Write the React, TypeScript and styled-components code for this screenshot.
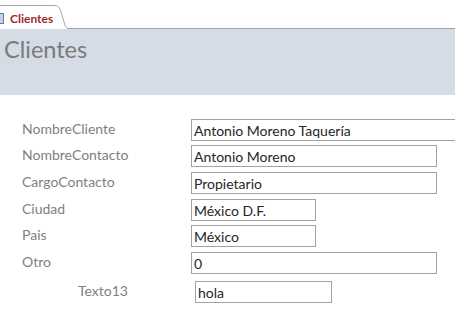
import React from "react";
import styled, { createGlobalStyle } from "styled-components";

const Global = createGlobalStyle`
  html, body { margin: 0; padding: 0; background: #ffffff; }
  body { font-family: Lato, "Noto Sans", sans-serif; overflow: hidden; }
`;

const Page = styled.div`
  width: 455px;
  height: 318px;
  overflow: hidden;
  background: #ffffff;
`;

const TabBar = styled.div`
  height: 29px;
  display: flex;
  align-items: flex-end;
  position: relative;
`;

const Tab = styled.div`
  display: flex;
  align-items: stretch;
  height: 24px;
  position: relative;
  z-index: 1;
`;

const TabBody = styled.div`
  display: flex;
  align-items: center;
  gap: 6px;
  height: 23px;
  border-top: 1px solid #a5a5a5;
  background: #ffffff;
  padding-left: 0;
`;

const TabIcon = styled.span`
  width: 3px;
  height: 9px;
  margin-top: 1px;
  border: 1px solid #6a7a96;
  border-left: none;
  background: #c5d1e3;
`;

const TabLabel = styled.span`
  font-family: Lato, sans-serif;
  font-weight: 700;
  font-size: 12px;
  color: #a3262e;
  padding-top: 1px;
`;

const TabCurve = styled.svg`
  display: block;
  width: 15px;
  height: 24px;
`;

const TabLine = styled.div`
  flex: 1;
  height: 23px;
  border-bottom: 1px solid #9ea3ab;
`;

const Header = styled.div`
  height: 66px;
  background: #d5dce6;
  padding: 6px 0 0 4px;
  box-sizing: border-box;
`;

const Title = styled.h1`
  margin: 0;
  font-family: Lato, sans-serif;
  font-weight: 400;
  font-size: 23.5px;
  color: #7b7b7b;
`;

const Form = styled.div`
  padding-top: 24px;
  display: flex;
  flex-direction: column;
`;

const Row = styled.div<{ $top?: number; $boxLeft?: number }>`
  display: grid;
  grid-template-columns: ${(p) => p.$boxLeft ?? 191}px auto;
  align-items: center;
  height: 22px;
  margin-top: ${(p) => p.$top ?? 0}px;
`;

const Label = styled.span<{ $left?: number }>`
  padding-left: ${(p) => p.$left ?? 22}px;
  padding-bottom: 4px;
  font-family: Lato, sans-serif;
  font-size: 14px;
  color: #7f7f7f;
  white-space: nowrap;
`;

const Box = styled.div<{ $w: number }>`
  width: ${(p) => p.$w}px;
  height: 22px;
  box-sizing: border-box;
  border: 1px solid #a3a3a3;
  padding: 0 0 0 2px;
  display: flex;
  align-items: center;
  font-family: Lato, sans-serif;
  font-size: 14px;
  color: #262626;
  white-space: nowrap;
  overflow: hidden;
  background: #ffffff;
`;

const rows = [
  { label: "NombreCliente", value: "Antonio Moreno Taquería", w: 290, top: 0 },
  { label: "NombreContacto", value: "Antonio Moreno", w: 246, top: 4 },
  { label: "CargoContacto", value: "Propietario", w: 246, top: 5 },
  { label: "Ciudad", value: "México D.F.", w: 125, top: 5 },
  { label: "Pais", value: "México", w: 125, top: 4 },
  { label: "Otro", value: "0", w: 246, top: 5 },
];

export default function App() {
  return (
    <Page>
      <Global />
      <TabBar>
        <Tab>
          <TabBody>
            <TabIcon />
            <TabLabel>Clientes</TabLabel>
          </TabBody>
          <TabCurve viewBox="0 0 15 24">
            <path d="M0 0.5 H2 C6 0.5 7 4 9 10 C11 17 12 22.5 15 23.5 L15 24 L0 24 Z" fill="#ffffff" />
            <path d="M0 0.5 H2 C6 0.5 7 4 9 10 C11 17 12 22.5 15 23.5" fill="none" stroke="#a5a5a5" strokeWidth="1" />
          </TabCurve>
        </Tab>
        <TabLine />
      </TabBar>
      <Header>
        <Title>Clientes</Title>
      </Header>
      <Form>
        {rows.map((r) => (
          <Row key={r.label} $top={r.top}>
            <Label>{r.label}</Label>
            <Box $w={r.w}>{r.value}</Box>
          </Row>
        ))}
        <Row $top={7} $boxLeft={195}>
          <Label $left={78}>Texto13</Label>
          <Box $w={137}>hola</Box>
        </Row>
      </Form>
    </Page>
  );
}
